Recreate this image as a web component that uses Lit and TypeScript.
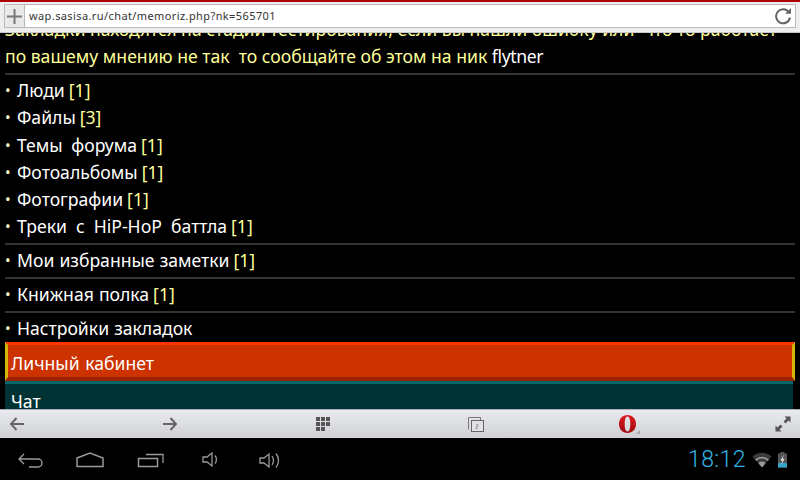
import { LitElement, html, css } from "lit";
import { customElement } from "lit/decorators.js";

const items1: [string, string, number][] = [
  ["Люди", "[1]", 0],
  ["Файлы", "[3]", 0],
  ["Темы форума", "[1]", 4],
  ["Фотоальбомы", "[1]", 0],
  ["Фотографии", "[1]", 0],
  ["Треки с HiP-HoP баттла", "[1]", 4.5],
];

@customElement("app-root")
export class AppRoot extends LitElement {
  static styles = css`
    :host { display: flex; flex-direction: column; width: 800px; height: 480px; overflow: hidden; background: #000;
      font-family: "Noto Sans", "Open Sans", sans-serif; }
    .top { height: 33px; flex: none; box-sizing: border-box; border-top: 2px solid #b00000; background: #eceef0; padding: 2px 4px 4px 4px; display: flex; border-bottom: 1px solid #c8c8c8; }
    .plus { width: 21px; flex: none; box-sizing: border-box; border: 1px solid #bbb; background: #e9e9e9; display: flex; align-items: center; justify-content: center; }
    .url { flex: 1; box-sizing: border-box; border: 1px solid #bbb; border-left: none; background: #fff; display: flex; align-items: center; justify-content: space-between; padding: 0 3px 0 4px; font-size: 11px; color: #333; letter-spacing: 0.4px; }
    .url span { padding-bottom: 1px; }
    .view { flex: 1; min-height: 0; overflow: hidden; background: #000; padding: 0 5px; }
    .page { margin-top: -17px; font-size: 17.6px; line-height: 27.2px; color: #ffff99; }
    .intro { white-space: pre; overflow: hidden; }
    .white { color: #fff; letter-spacing: -0.4px; }
    hr { height: 2px; border: none; margin: 2.400px 0; background: #333; }
    .row { white-space: nowrap; display: flex; }
    .dot { width: 12px; flex: none; font-size: 15px; color: #ffffcc; }
    .row .n { color: #fff; margin-right: 4px; word-spacing: 0.5px; }
    .red { height: 39px; box-sizing: border-box; border-top: 3px solid #ff3300; border-bottom: 4px solid #992200; background: #cc3300; color: #fff; padding: 0 3px 0 3px; border-left: 3px solid #d4b400; border-right: 3px solid #d4b400; line-height: 36px; word-spacing: 1px; }
    .teal { height: 40px; box-sizing: border-box; margin-right: 2px; border-top: 3px solid #006666; background: #003333; color: #fff; padding-left: 6px; line-height: 34px; }
    .bar { height: 29px; flex: none; box-sizing: border-box; border-top: 1px solid #aab; background: linear-gradient(#e9eaee, #cfd1d6); position: relative; }
    .ic { position: absolute; top: 0; display: block; }
    .sys { height: 42px; flex: none; background: #000; position: relative; }
    .clock { position: absolute; left: 688px; top: 8px; font-family: Roboto, sans-serif; font-size: 23px; line-height: 28px; font-weight: 300; color: #33b5e5; letter-spacing: 0.4px; }
  `;

  render() {
    return html`
      <div class="top">
        <div class="plus">
          <svg width="15" height="15" viewBox="0 0 15 15"><path d="M7.5 0v15M0 7.500h15" stroke="#777" stroke-width="2"/></svg>
        </div>
        <div class="url">
          <span>wap.sasisa.ru/chat/memoriz.php?nk=565701</span>
          <svg width="18" height="18" viewBox="0 0 18 18"><path d="M15 5.500A7 7 0 1 0 16 10.500" fill="none" stroke="#666" stroke-width="2"/><path d="M11 6.800h6V1z" fill="#666"/></svg>
        </div>
      </div>
      <div class="view">
        <div class="page">
          <div class="intro">Закладки находятся на стадии тестирования, если вы нашли ошибку или  что то работает
по вашему мнению не так  то сообщайте об этом на ник <span class="white">flytner</span></div>
          <hr />
          ${items1.map(([n, c, ws]) => html`<div class="row"><span class="dot">•</span><span class="n" style="word-spacing:${ws}px">${n}</span><span>${c}</span></div>`)}
          <hr />
          <div class="row"><span class="dot">•</span><span class="n">Мои избранные заметки</span><span>[1]</span></div>
          <hr />
          <div class="row"><span class="dot">•</span><span class="n">Книжная полка</span><span>[1]</span></div>
          <hr />
          <div class="row"><span class="dot">•</span><span class="n">Настройки закладок</span></div>
          <div class="red">Личный кабинет</div>
          <div class="teal">Чат</div>
        </div>
      </div>
      <div class="bar">
        <svg class="ic" style="left:9px" width="16" height="28" viewBox="0 0 16 28"><path d="M15 14H2M7.500 8L2 14l5.500 6" fill="none" stroke="#666" stroke-width="2"/></svg>
        <svg class="ic" style="left:162px" width="16" height="28" viewBox="0 0 16 28"><path d="M1 14h13M8.500 8l5.500 6-5.500 6" fill="none" stroke="#666" stroke-width="2"/></svg>
        <svg class="ic" style="left:316px" width="15" height="28" viewBox="0 0 15 28">
          <path d="M0 7h4v4H0zM5 7h4v4H5zM10 7h4v4h-4zM0 12h4v4H0zM5 12h4v4H5zM10 12h4v4h-4zM0 17h4v4H0zM5 17h4v4H5z" fill="#555"/>
        </svg>
        <svg class="ic" style="left:468px" width="17" height="28" viewBox="0 0 17 28">
          <path d="M.5 19.500v-12h12v3" fill="none" stroke="#777"/>
          <rect x="3.500" y="10.500" width="12" height="11" fill="#e0e1e5" stroke="#666"/>
          <path d="M8 14.500h2v2H8v2h2" fill="none" stroke="#888" stroke-width=".7"/>
        </svg>
        <svg class="ic" style="left:618px" width="22" height="28" viewBox="0 0 22 28">
          <defs><linearGradient id="op" x1="0" y1="0" x2="0" y2="1"><stop offset="0" stop-color="#d81c22"/><stop offset="1" stop-color="#a00a0e"/></linearGradient></defs>
          <path fill-rule="evenodd" fill="url(#op)" d="M9.500 5C4.500 5 1 8.800 1 14s3.500 9 8.500 9S18 19.200 18 14 14.500 5 9.500 5zM9.500 6.500c1.900 0 2.800 3 2.800 7.500s-.9 7.500-2.800 7.500S6.700 18.500 6.700 14s.9-7.500 2.800-7.500z"/>
          <path d="M18 24h4v-4z" fill="#aaa"/>
        </svg>
        <svg class="ic" style="left:775px" width="16" height="28" viewBox="0 0 16 28">
          <path d="M15.500 6.500v6l-2-2-3 3-2-2 3-3-2-2zM.5 21.500v-6l2 2 3-3 2 2-3 3 2 2z" fill="#555"/>
        </svg>
      </div>
      <div class="sys">
        <svg class="ic" style="left:17px;top:14px" width="27" height="17" viewBox="0 0 27 17"><path d="M2 7h19a4 4 0 0 1 0 8H12M7 2L2 7l5 5" fill="none" stroke="#9a9a9a" stroke-width="1.400"/></svg>
        <svg class="ic" style="left:76px;top:14px" width="28" height="16" viewBox="0 0 28 16"><path d="M1 6L14 1l13 5v8.500H1z" fill="none" stroke="#9a9a9a" stroke-width="1.500"/></svg>
        <svg class="ic" style="left:137px;top:14px" width="28" height="16" viewBox="0 0 28 16"><rect x="1.500" y="6.500" width="19" height="8" fill="none" stroke="#9a9a9a" stroke-width="1.500"/><path d="M9 2.500h17V11" fill="none" stroke="#9a9a9a" stroke-width="1.300"/></svg>
        <svg class="ic" style="left:202px;top:14px" width="17" height="16" viewBox="0 0 17 16"><path d="M1 5h4l5-4v13l-5-4H1z" fill="none" stroke="#9a9a9a" stroke-width="1.300"/><path d="M13 3.500q3 4 0 8" fill="none" stroke="#9a9a9a" stroke-width="1.300"/></svg>
        <svg class="ic" style="left:259px;top:14px" width="22" height="18" viewBox="0 0 22 18"><path d="M1 6h4l5-4v13l-5-4H1z" fill="none" stroke="#9a9a9a" stroke-width="1.300"/><path d="M13 4q3 4.500 0 9M17 1.500q5 7 0 14" fill="none" stroke="#9a9a9a" stroke-width="1.300"/></svg>
        <div class="clock">18:12</div>
        <svg class="ic" style="left:752px;top:14px" width="20" height="16" viewBox="0 0 20 16"><path d="M0.500 4.500a14 14 0 0 1 19 0L10 15.500z" fill="#3a3a3a"/><path d="M3 7.500a10 10 0 0 1 14 0l-1.300 1.500a8 8 0 0 0-11.400 0zM6.300 11a5.500 5.500 0 0 1 7.400 0L10 15.500z" fill="#999"/></svg>
        <svg class="ic" style="left:777px;top:14px" width="11" height="16" viewBox="0 0 11 16"><path d="M3.500 0h4v1.500H10V15.500H1V1.500h2.500z" fill="#555"/><path d="M1 11h9v4.500H1z" fill="#33a5c9"/><path d="M7 2.500L3.500 8.500h2L4 13l3.500-6h-2z" fill="#eee"/></svg>
      </div>
    `;
  }
}
